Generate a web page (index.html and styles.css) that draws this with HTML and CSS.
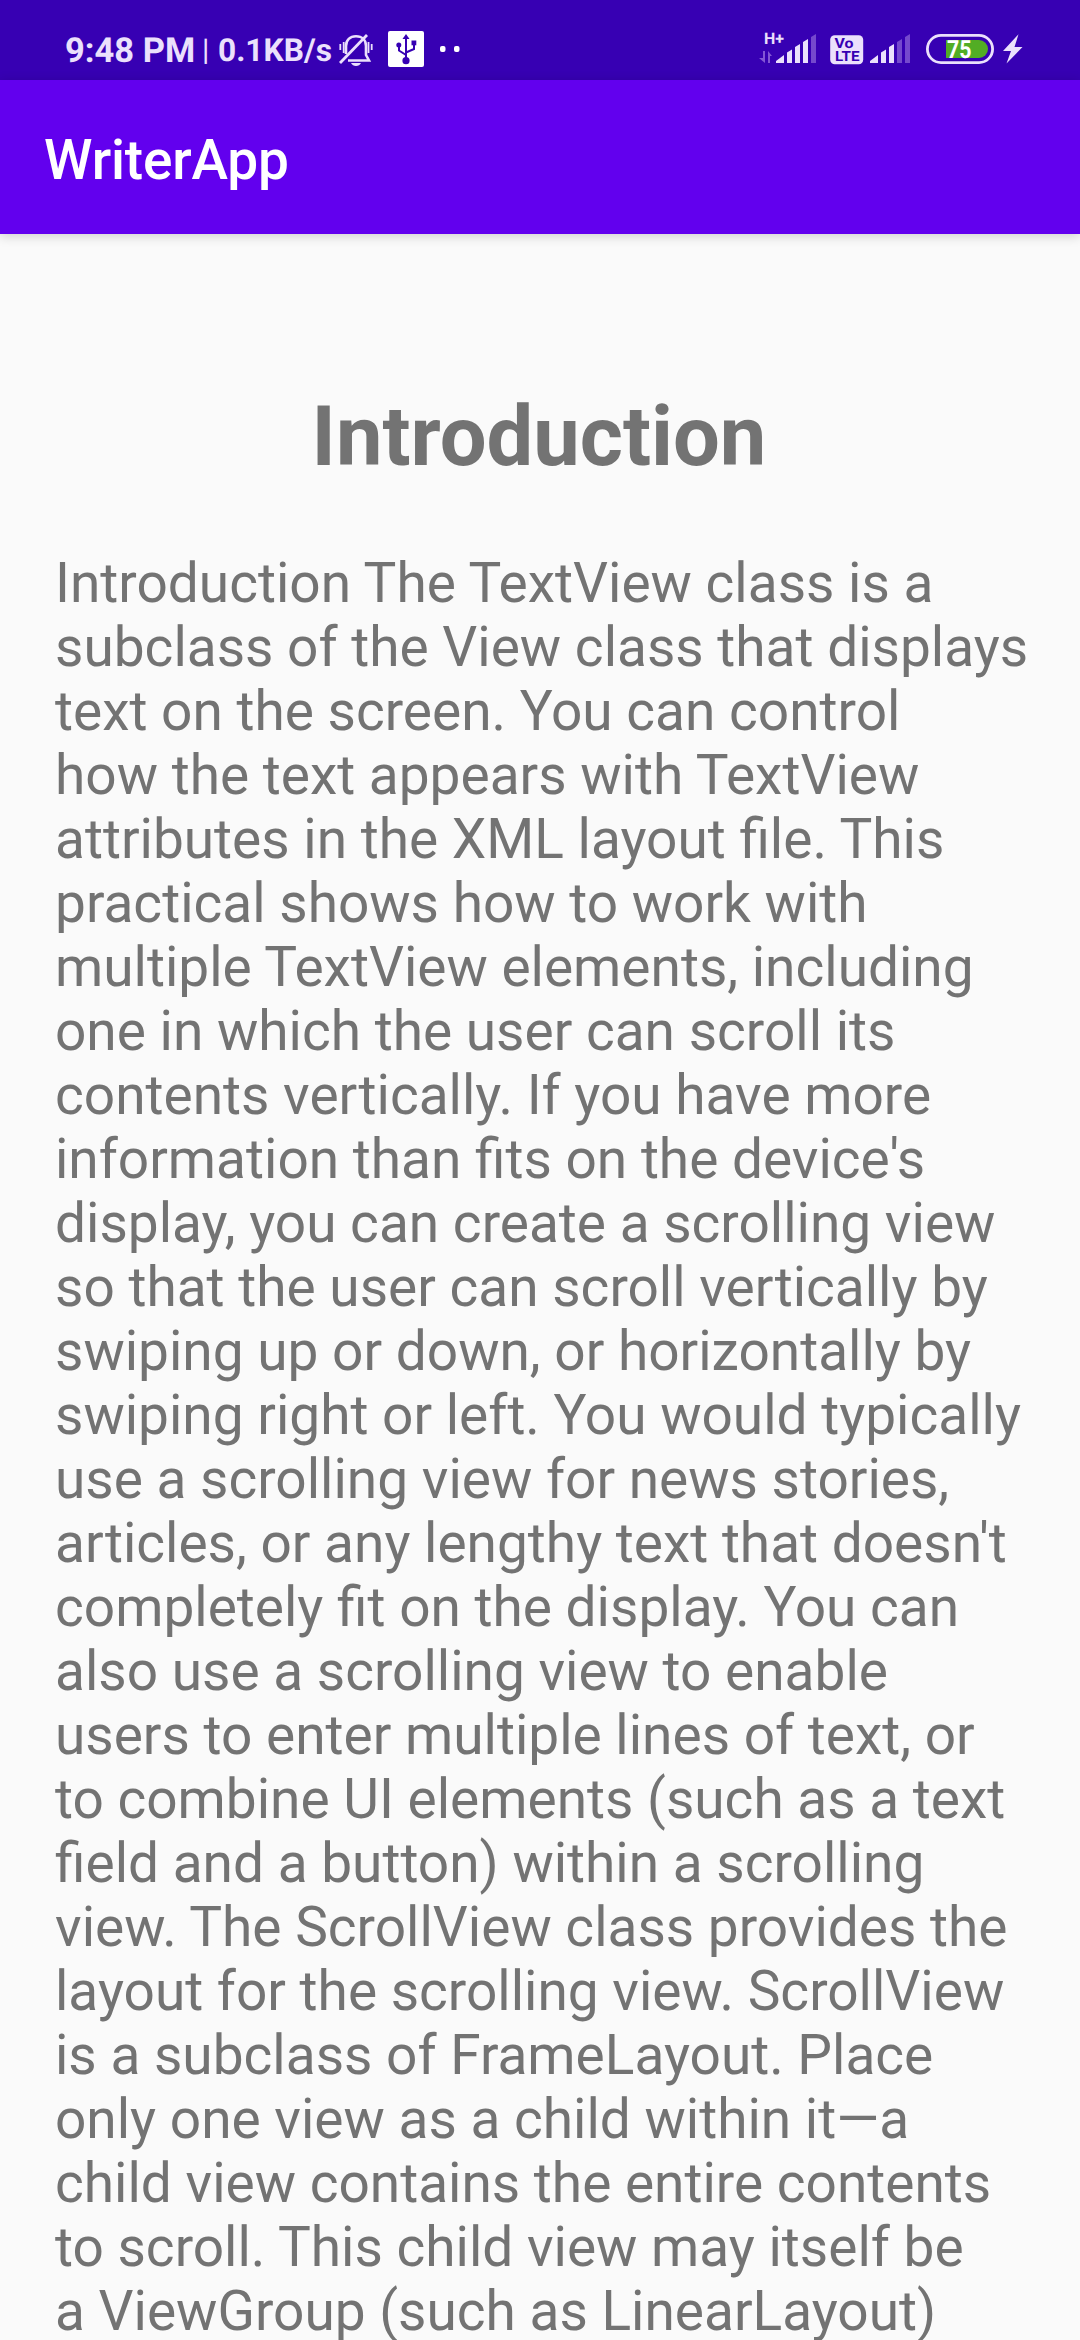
FILE: index.html
```html
<!DOCTYPE html>
<html lang="en">
<head>
<meta charset="utf-8">
<title>WriterApp</title>
<link rel="stylesheet" href="styles.css">
</head>
<body>
<div class="screen">
  <header class="status-bar">
    <div class="status-left">
      <span class="clock">9:48 PM</span>
      <span class="divider">|</span>
      <span class="speed">0.1KB/s</span>
      <svg class="icon-bell" width="36" height="36" viewBox="0 0 36 36">
        <g fill="none" stroke="#ebe0fc" stroke-width="2.6">
          <path d="M8 22V14C8 8 12 4.300 18 4.300C24 4.300 28 8 28 14V23L31 28.500H10"/>
          <path d="M2.300 12v6M5.700 10v11M33.700 12v6M30.500 10v11" stroke-width="1.800"/>
          <path d="M2 31L29 3" stroke-width="2.800"/>
        </g>
        <path d="M13 31h10q-1.500 3-5 3t-5-3z" fill="#ebe0fc"/>
      </svg>
      <svg class="icon-usb" width="36" height="36" viewBox="0 0 36 36">
        <rect width="36" height="36" rx="2" fill="#fff"/>
        <g fill="none" stroke="#3700b3" stroke-width="2">
          <path d="M18 29V6M18 24L11 19.500V14M18 21.500L26 18V12"/>
        </g>
        <g fill="#3700b3"><circle cx="18" cy="29.700" r="3.600"/><path d="M18 3l3.500 5h-7z"/><circle cx="10.800" cy="14" r="2.500"/><path d="M23.500 9.500h4.800v4.800h-4.800z"/></g>
      </svg>
      <svg class="icon-dots" width="22" height="8" viewBox="0 0 22 8"><g fill="#fff"><rect x="1" y="1" width="5.500" height="6" rx="2"/><rect x="15" y="1" width="5.500" height="6" rx="2"/></g></svg>
    </div>
    <div class="status-right">
      <svg class="icon-network" width="58" height="34" viewBox="0 0 58 34">
        <text class="network-label" x="5" y="14" textLength="20" lengthAdjust="spacingAndGlyphs">H+</text>
        <g fill="#8356d5"><path d="M4 21h2v12L0 28h4z"/><path d="M9 33V21l4 5h-2v7z"/></g>
        <g fill="#ebe0fc"><path d="M17 33v-2l8-6v8zM28 33V22.500l5-3V33zM36 33V17l5-3V33zM44 33V12l5-3V33z"/><path fill="#7549cd" d="M52 33V7l5-3V33z"/></g>
      </svg>
      <svg class="icon-volte" width="34" height="30" viewBox="0 0 34 30">
        <rect x=".2" y=".2" width="33" height="29" rx="4.500" fill="#ebe0fc"/>
        <text class="volte-label" x="4.500" y="13" textLength="19" lengthAdjust="spacingAndGlyphs">Vo</text>
        <text class="volte-label" x="5" y="26" textLength="24.500" lengthAdjust="spacingAndGlyphs">LTE</text>
      </svg>
      <svg class="icon-signal" width="41" height="34" viewBox="16 0 41 34">
        <path fill="#ebe0fc" d="M17 33v-2l8-6v8zM28 33V22.500l5-3V33zM36 33V17l5-3V33z"/>
        <path fill="#7549cd" d="M44 33V12l5-3V33zM52 33V7l5-3V33z"/>
      </svg>
      <svg class="icon-battery" width="68" height="30" viewBox="0 0 68 30">
        <rect x="1.400" y="1.400" width="65.200" height="27.200" rx="13.600" fill="none" stroke="#ebe0fc" stroke-width="2.800"/>
        <path fill="#52ad24" d="M20 6h33a9 9 0 0 1 0 18H20z"/>
        <text class="battery-label" x="21" y="23.800" textLength="24.500" lengthAdjust="spacingAndGlyphs">75</text>
      </svg>
      <svg class="icon-bolt" width="20" height="30" viewBox="0 0 20 30"><path fill="#ebe0fc" d="M15.500 .3L0 17h8L3.500 29.500L19.500 13H11.500z"/></svg>
    </div>
  </header>
  <div class="app-bar"><h1 class="app-title">WriterApp</h1></div>
  <main class="content">
    <h2 class="heading">Introduction</h2>
    <p class="article">Introduction The TextView class is a<br>
subclass of the View class that displays<br>
text on the screen. You can control<br>
how the text appears with TextView<br>
attributes in the XML layout file. This<br>
practical shows how to work with<br>
multiple TextView elements, including<br>
one in which the user can scroll its<br>
contents vertically. If you have more<br>
information than fits on the device's<br>
display, you can create a scrolling view<br>
so that the user can scroll vertically by<br>
swiping up or down, or horizontally by<br>
swiping right or left. You would typically<br>
use a scrolling view for news stories,<br>
articles, or any lengthy text that doesn't<br>
completely fit on the display. You can<br>
also use a scrolling view to enable<br>
users to enter multiple lines of text, or<br>
to combine UI elements (such as a text<br>
field and a button) within a scrolling<br>
view. The ScrollView class provides the<br>
layout for the scrolling view. ScrollView<br>
is a subclass of FrameLayout. Place<br>
only one view as a child within it—a<br>
child view contains the entire contents<br>
to scroll. This child view may itself be<br>
a ViewGroup (such as LinearLayout)</p>
  </main>
</div>
</body>
</html>
```
FILE: styles.css
```css
* { box-sizing: border-box; }
body { margin: 0; background: #fafafa; font-family: Roboto, sans-serif; }
h1, h2, p { margin: 0; }
svg { display: block; flex: none; }
.screen { width: 1080px; height: 2340px; overflow: hidden; display: flex; flex-direction: column; }
.status-bar { flex: none; height: 80px; padding: 31px 57px 0 65px; background: #3700b3; color: #ebe0fc; display: flex; justify-content: space-between; text-rendering: geometricPrecision; }
.status-left, .status-right { display: flex; align-items: flex-start; }
.status-left span { flex: none; line-height: 40px; font-weight: 700; white-space: nowrap; }
.clock { width: 137px; font-size: 34.5px; }
.status-left .divider { width: 16px; font-size: 30px; font-weight: 400; }
.speed { width: 120px; font-size: 31.7px; }
.icon-bell { margin-top: 1px; }
.icon-usb { margin-left: 14px; }
.icon-dots { margin: 14px 0 0 15px; }
.icon-network { margin-top: -1px; }
.icon-volte { margin: 4px 0 0 13px; }
.icon-signal { margin: -1px 0 0 5px; }
.icon-battery { margin: 3px 0 0 16px; }
.icon-bolt { margin: 3px 0 0 9px; }
.network-label { font: 700 16px Roboto, sans-serif; fill: #ebe0fc; }
.volte-label { font: 700 14px Roboto, sans-serif; fill: #3700b3; }
.battery-label { font: 700 25px Roboto, sans-serif; fill: #fff; }
.app-bar { flex: none; height: 154px; padding-left: 44px; display: flex; align-items: center; background: #6200ee; box-shadow: 0 2px 11px rgba(0, 0, 0, .18); }
.app-title { padding-top: 5px; color: #fff; font-size: 55px; line-height: 64px; font-weight: 500; letter-spacing: -.17px; }
.content { padding: 154px 0 0 55px; color: #737373; }
.heading { padding-right: 57px; text-align: center; font-size: 83px; line-height: 97px; font-weight: 700; }
.article { margin-top: 66px; font-size: 55px; line-height: 64px; white-space: nowrap; }
```
